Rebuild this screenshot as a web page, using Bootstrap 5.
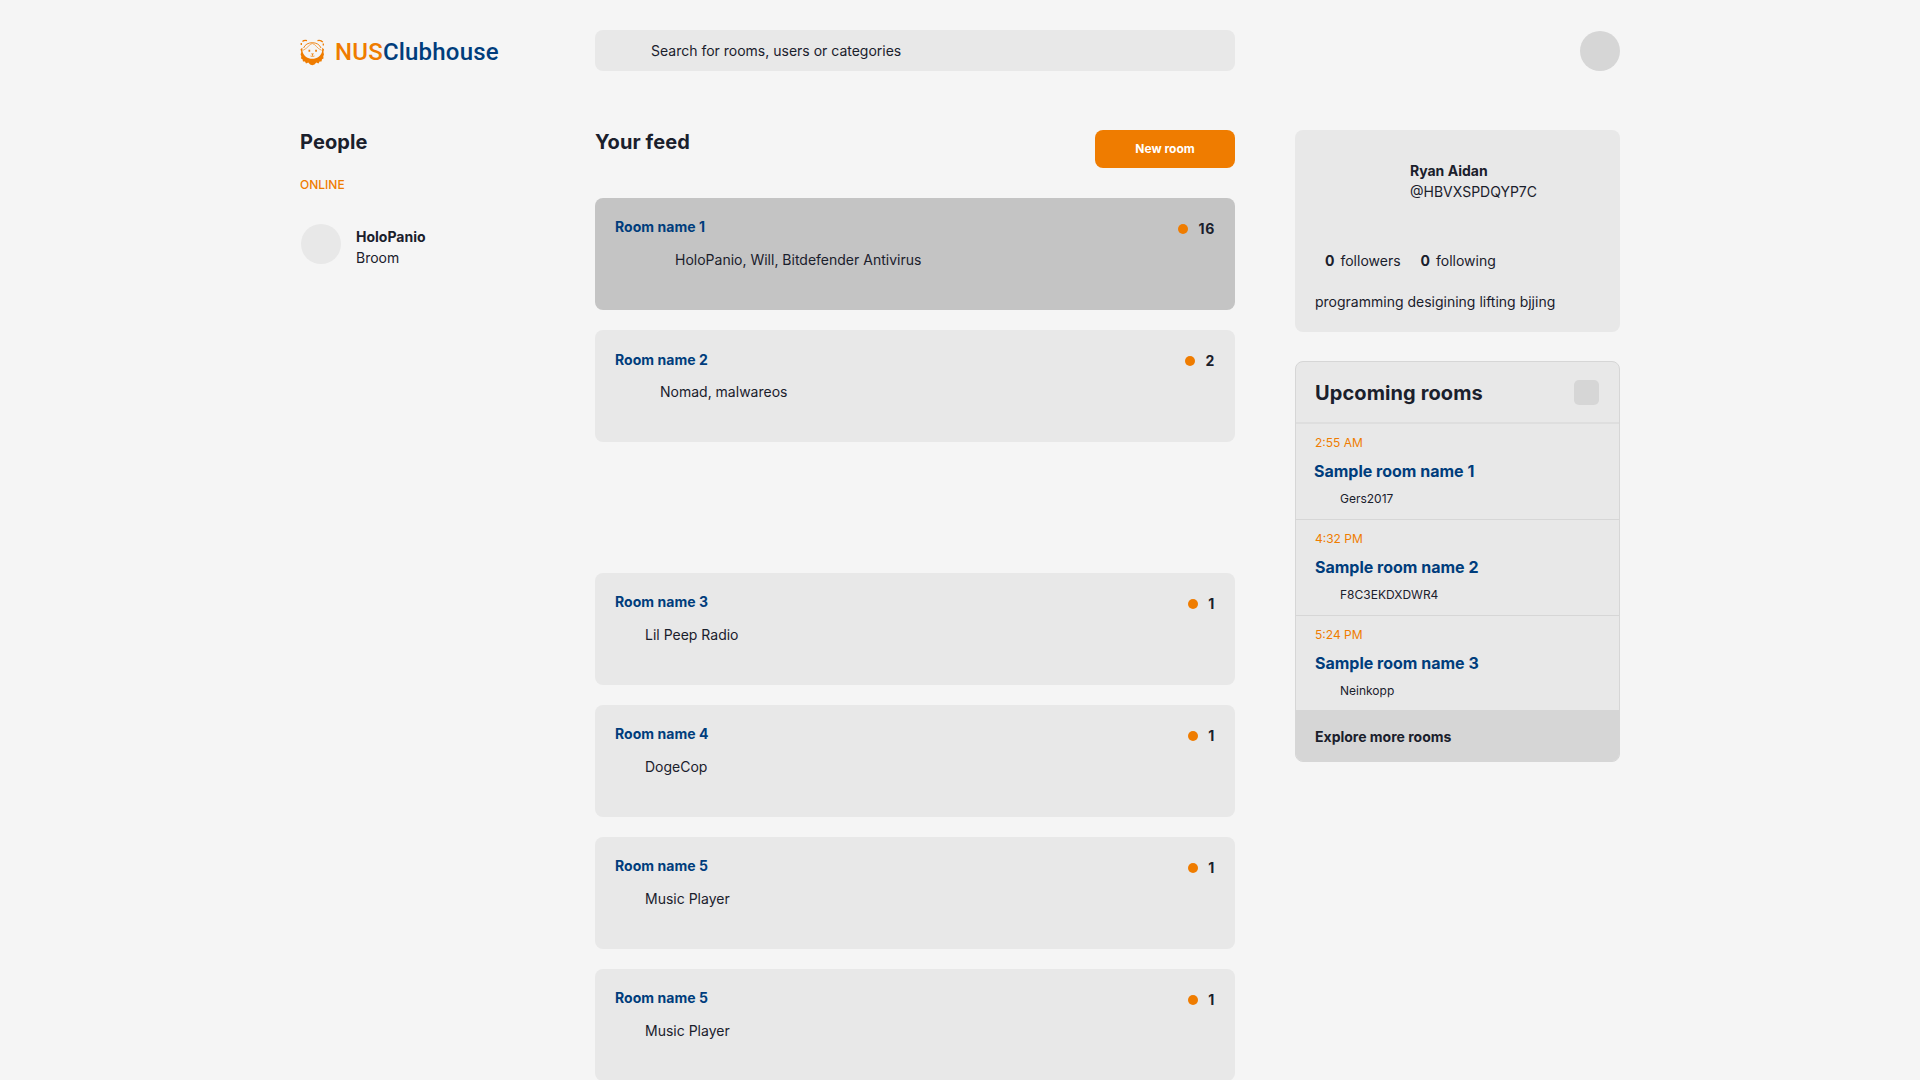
<!DOCTYPE html>
<html lang="en">
<head>
<meta charset="utf-8">
<meta name="viewport" content="width=device-width, initial-scale=1">
<title>NUSClubhouse</title>
<link href="https://cdn.jsdelivr.net/npm/bootstrap@5.3.0/dist/css/bootstrap.min.css" rel="stylesheet">
<style>
  :root { --ink: #1a202c; --navy: #003d7c; --amber: #ef7c00; --panel: #e8e8e8; --shade: #d6d6d6; }
  body { background: #f5f5f5; color: var(--ink); font-family: Inter, "Liberation Sans", sans-serif; font-size: 14px; line-height: 20px; height: 1080px; overflow: hidden; }
  .shell { width: 1320px; }
  .cols { gap: 60px; }
  .side-left { width: 235px; }
  .feed { width: 640px; }
  .side-right { width: 325px; }
  .topbar { padding-top: 30px; margin-bottom: 59px; }
  .heading { font-size: 20px; line-height: 24px; font-weight: 700; letter-spacing: .1px; margin: 0; }
  .tiny { font-size: 12px; line-height: 16px; }
  .amber { color: var(--amber); }
  .navy { color: var(--navy); }
  .brand { color: var(--navy); font: 500 24px/28px Roboto, sans-serif; letter-spacing: .2px; gap: 10px; }
  .brand-name { padding-top: 2px; }
  .searchbar { height: 41px; background: var(--panel); border: 0; border-radius: 8px; padding: 0 56px; font-size: 14px; color: var(--ink); }
  .searchbar::placeholder { color: var(--ink); opacity: 1; }
  .avatar { width: 40px; height: 40px; border-radius: 50%; background: var(--panel); }
  .avatar-top { background: var(--shade); margin-top: 1px; }
  .online { margin-top: 23px; font-weight: 500; }
  .person { margin-top: 31px; padding-left: 1px; gap: 15px; }
  .pair { line-height: 21px; }
  .person .pair { padding-top: 2px; }
  .btn-new { width: 140px; height: 38px; border-radius: 8px; background: var(--amber); color: #fff; font-size: 12px; font-weight: 700; border: 0; padding: 0; }
  .feed-head { margin-bottom: 30px; }
  .panel { background: var(--panel); border: 0; border-radius: 8px; color: var(--ink); }
  .room { height: 112px; margin-bottom: 20px; padding: 19px 20px 0; }
  .room-active { background: #c4c4c4; }
  .room-gap { margin-bottom: 131px; }
  .room-title { letter-spacing: .04px; }
  .room-low .room-title { padding-top: 1px; }
  .members { margin-top: 11px; }
  .m1 { padding-left: 30px; } .m2 { padding-left: 45px; } .m3 { padding-left: 60px; }
  .count { gap: 10px; padding-top: 2px; letter-spacing: .7px; }
  .dot { width: 10px; height: 10px; border-radius: 50%; background: var(--amber); }
  .profile { height: 202px; margin-bottom: 29px; padding: 30px 20px 0; }
  .profile .pair { padding-left: 95px; }
  .stats { padding-left: 10px; margin-top: 49px; gap: 20px; }
  .stats b { margin-right: 6px; }
  .bio { margin-top: 21px; }
  .upcoming { border: 1px solid var(--shade); overflow: hidden; }
  .up-head { height: 62px; padding: 0 20px 0 19px; border-bottom: 2px solid #dedede; }
  .up-head .heading { padding-top: 2px; }
  .up-more { width: 25px; height: 25px; border-radius: 5px; background: var(--shade); }
  .up-item { height: 96px; padding: 11px 19px 0; border-bottom: 1px solid var(--shade); }
  .up-item:last-of-type { height: 94px; border-bottom: 0; }
  .up-name { font-size: 16px; margin-top: 10px; }
  .up-item:first-of-type .up-name { margin-left: -1px; }
  .up-host { padding-left: 25px; margin-top: 10px; }
  .up-foot { height: 51px; padding: 3px 19px 0; background: var(--shade); }
</style>
<script src="https://cdn.jsdelivr.net/npm/bootstrap@5.3.0/dist/js/bootstrap.bundle.min.js"></script>
</head>
<body>
<div class="shell mx-auto">
  <header class="topbar cols d-flex align-items-start">
    <a class="brand side-left d-flex align-items-center text-decoration-none" href="#">
      <svg width="25" height="41" viewBox="0 0 25 41" fill="none" aria-hidden="true">
        <path d="M2.500 11.500Q4 10 7 10.600M17.500 10.600Q21 9.800 22.800 12.200M1.300 13v2M23.300 13.500v2" stroke="#ef7c00" stroke-width="1.300"/>
        <path d="M3.600 18C4.800 14.600 8.300 12.700 12.300 12.700S19.800 14.600 21 18" stroke="#ef7c00" stroke-width=".9"/>
        <path d="M12.300 13.500C8.800 14.300 8 18.300 3 20.300M12.300 13.500c3.500.8 4.300 4.800 9.300 6.800" stroke="#ef7c00" stroke-width=".6"/>
        <path d="M.5 19.200 2.300 17.800 2.600 22C4 26 7.500 28.800 12.300 28.800S20.600 26 22 22L22.300 17.800 24 19.200 23.400 22 24 24.500 23.300 26.300 23.500 28.500 22 29.200 21.500 31.500 19.600 31.400 18.500 33.400 16.300 32.600 14.500 34.500 12.300 35.300 10.100 34.500 8.300 32.600 6 33.400 5 31.400 3 31.500 2.500 29.200 1 28.500 1.300 26.300.6 24.500 1.300 22Z" fill="#ef7c00"/>
        <path d="M8.500 19.800h1.700v1.900H8.500zM15.200 19.800h1.700v1.900h-1.700zM11 23.600h3l-1.500 1.700z" fill="#ef7c00"/>
        <path d="M12.500 25v1M10.500 26q2 1 4 0" stroke="#ef7c00" stroke-width=".7"/>
      </svg>
      <span class="brand-name"><span class="amber">NUS</span>Clubhouse</span>
    </a>
    <div class="feed"><input class="form-control searchbar" type="text" placeholder="Search for rooms, users or categories"></div>
    <div class="side-right d-flex justify-content-end"><div class="avatar avatar-top"></div></div>
  </header>

  <main class="cols d-flex align-items-start">
    <aside class="side-left">
      <h2 class="heading">People</h2>
      <div class="online tiny amber">ONLINE</div>
      <div class="person d-flex">
        <div class="avatar"></div>
        <div class="pair"><div class="fw-bold">HoloPanio</div><div>Broom</div></div>
      </div>
    </aside>

    <section class="feed">
      <div class="feed-head d-flex justify-content-between align-items-start">
        <h2 class="heading">Your feed</h2>
        <button class="btn btn-new">New room</button>
      </div>
      <article class="card panel room room-active">
        <div class="d-flex justify-content-between"><div class="room-title navy fw-bold">Room name 1</div><div class="count d-flex align-items-center fw-bold"><span class="dot"></span>16</div></div>
        <div class="members m3">HoloPanio, Will, Bitdefender Antivirus</div>
      </article>
      <article class="card panel room room-gap room-low">
        <div class="d-flex justify-content-between"><div class="room-title navy fw-bold">Room name 2</div><div class="count d-flex align-items-center fw-bold"><span class="dot"></span>2</div></div>
        <div class="members m2">Nomad, malwareos</div>
      </article>
      <article class="card panel room">
        <div class="d-flex justify-content-between"><div class="room-title navy fw-bold">Room name 3</div><div class="count d-flex align-items-center fw-bold"><span class="dot"></span>1</div></div>
        <div class="members m1">Lil Peep Radio</div>
      </article>
      <article class="card panel room">
        <div class="d-flex justify-content-between"><div class="room-title navy fw-bold">Room name 4</div><div class="count d-flex align-items-center fw-bold"><span class="dot"></span>1</div></div>
        <div class="members m1">DogeCop</div>
      </article>
      <article class="card panel room">
        <div class="d-flex justify-content-between"><div class="room-title navy fw-bold">Room name 5</div><div class="count d-flex align-items-center fw-bold"><span class="dot"></span>1</div></div>
        <div class="members m1">Music Player</div>
      </article>
      <article class="card panel room">
        <div class="d-flex justify-content-between"><div class="room-title navy fw-bold">Room name 5</div><div class="count d-flex align-items-center fw-bold"><span class="dot"></span>1</div></div>
        <div class="members m1">Music Player</div>
      </article>
    </section>

    <aside class="side-right">
      <section class="card panel profile">
        <div class="pair"><div class="fw-bold">Ryan Aidan</div><div>@HBVXSPDQYP7C</div></div>
        <div class="stats d-flex"><span><b>0</b>followers</span><span><b>0</b>following</span></div>
        <div class="bio">programming desigining lifting bjjing</div>
      </section>
      <section class="card panel upcoming">
        <header class="up-head d-flex justify-content-between align-items-center"><h2 class="heading">Upcoming rooms</h2><div class="up-more"></div></header>
        <div class="up-item"><div class="tiny amber">2:55 AM</div><div class="up-name navy fw-bold">Sample room name 1</div><div class="up-host tiny">Gers2017</div></div>
        <div class="up-item"><div class="tiny amber">4:32 PM</div><div class="up-name navy fw-bold">Sample room name 2</div><div class="up-host tiny">F8C3EKDXDWR4</div></div>
        <div class="up-item"><div class="tiny amber">5:24 PM</div><div class="up-name navy fw-bold">Sample room name 3</div><div class="up-host tiny">Neinkopp</div></div>
        <footer class="up-foot d-flex align-items-center fw-bold">Explore more rooms</footer>
      </section>
    </aside>
  </main>
</div>
</body>
</html>
